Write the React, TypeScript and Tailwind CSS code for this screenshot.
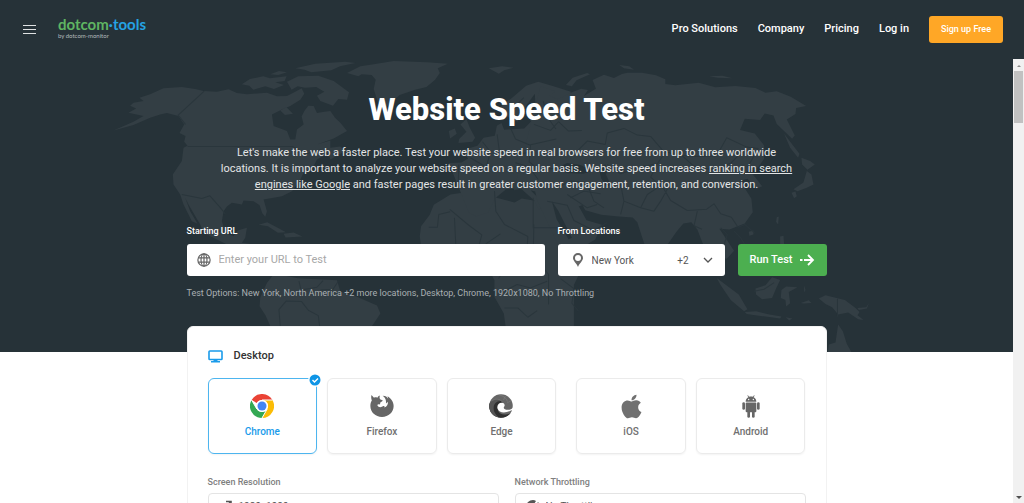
import { useState } from 'react'
import type { ReactNode } from 'react'
import { FaApple } from 'react-icons/fa'

type BrowserId = 'chrome' | 'firefox' | 'edge' | 'ios' | 'android'

const navLinks = ['Pro Solutions', 'Company', 'Pricing', 'Log in']

function ChromeIcon() {
  return (
    <svg viewBox="0 0 48 48" className="size-6">
      <path fill="#ea4335" d="M3.2 12A24 24 0 0 1 44.8 12H24a12 12 0 0 0-10.4 6z" />
      <path fill="#fbbc05" d="M44.8 12A24 24 0 0 1 24 48l10.4-18A12 12 0 0 0 34.4 18 12 12 0 0 0 24 12z" />
      <path fill="#34a853" d="M3.2 12A24 24 0 0 0 24 48l10.4-18a12 12 0 0 1-20.8 0z" />
      <path stroke="#fff" strokeWidth="2" d="M3.2 12l10.4 18M44.8 12H24M24 48l10.4-18" />
      <circle cx="24" cy="24" r="12" fill="#fff" />
      <circle cx="24" cy="24" r="9" fill="#4285f4" />
    </svg>
  )
}

function FirefoxIcon() {
  return (
    <svg viewBox="0 0 66 66" className="size-6">
      <path
        fill="#666"
        d="M4 3l7 7c3-1 6-1 9 0 2-3 4-5 7-6-1 4-1 7 0 9 2 3 5 3 8 4-1 4-6 5-7 7 0 3 0 4-1 5-3-1-5-1-7 1 3 7 10 8 17 3 3 0 4 2 2 4 8-2 11-9 10-16l-5 5c1-9-2-16-9-21 8 0 12 3 15 8 0-3-1-5-2-7 9 5 17 15 17 27 0 17-14 30-32 30S1 50 1 33c0-6 1-10 4-15-2-5-2-10-1-15z"
      />
    </svg>
  )
}

function EdgeIcon() {
  return (
    <svg viewBox="0 0 48 48" className="size-6">
      <circle cx="24" cy="24" r="23.5" fill="#666" />
      <path fill="#303030" d="M1 20C6 10 20 8 27 17c3 4 2 7 0 8-7-3-11 2-9 8 3 9 16 11 26 4C38 46 28 49 20 47 7 45-2 32 1 20z" />
      <path fill="#555" d="M1 19C7 9 18 9 23 14c-10 0-16 9-13 20 2 6 6 10 10 13C7 45-2 33 1 19z" />
      <path fill="#fff" d="M28 18c-7-2-13 4-11 11 3 9 15 10 27 4l4-1V27c-3 5-12 6-17 3-3-2-1-4 0-6 1-3-1-5-3-6z" />
      <path fill="none" stroke="#858585" d="M20 2c9 1 15 7 17 13M33 4l-4 8M45 13l-9 5M5 14c7-5 16-5 22 2" />
    </svg>
  )
}

function AndroidIcon() {
  return (
    <svg viewBox="0 0 54 68" className="h-[23px] w-[18px]" fill="#666">
      <path d="M11 20C11 13 14 9 19 6l-3-5 2-1 3 5c4-1 8-1 12 0l3-5 2 1-3 5c5 3 8 7 8 14z" />
      <rect x="11" y="22" width="32" height="29" rx="3" />
      <rect x="1" y="21" width="8" height="23" rx="4" />
      <rect x="45" y="21" width="8" height="23" rx="4" />
      <rect x="16" y="46" width="8" height="22" rx="4" />
      <rect x="30" y="46" width="8" height="22" rx="4" />
      <circle cx="20" cy="13" r="2" fill="#fff" />
      <circle cx="34" cy="13" r="2" fill="#fff" />
    </svg>
  )
}

function GlobeIcon() {
  return (
    <svg viewBox="0 0 16 16" className="size-3.5 shrink-0" fill="none" stroke="#666" strokeWidth="1.4">
      <circle cx="8" cy="8" r="7" />
      <ellipse cx="8" cy="8" rx="3.4" ry="7" />
      <path d="M8 1v14M1.6 5.5h12.8M1.6 10.5h12.8" />
    </svg>
  )
}

function PinIcon() {
  return (
    <svg viewBox="0 0 10 14" className="h-3.5 w-2.5 shrink-0">
      <path fill="#666" fillRule="evenodd" d="M5 0a5 5 0 0 1 5 5c0 3-3.5 5-5 9C3.5 10 0 8 0 5a5 5 0 0 1 5-5zm0 2a3 3 0 1 0 0 6 3 3 0 0 0 0-6z" />
    </svg>
  )
}

function ArrowIcon() {
  return (
    <svg viewBox="0 0 16 14" className="h-3.5 w-4" fill="none" stroke="#fff" strokeWidth="1.8">
      <path d="M1 7h2.5M5 7h9M9 2l5 5-5 5" />
    </svg>
  )
}

function MonitorIcon() {
  return (
    <svg viewBox="0 0 15 13" className="h-[13px] w-[15px]">
      <rect x="1" y="1" width="13" height="8.5" rx="0.8" fill="none" stroke="#1a9bea" strokeWidth="1.6" />
      <path fill="#1a9bea" d="M5.500 9.500h4v1.500H12v1.500H3V11h2.500z" />
    </svg>
  )
}

function ExpandIcon() {
  return (
    <svg viewBox="0 0 12 12" className="size-3" fill="none" stroke="#555" strokeWidth="1.6">
      <path d="M5 1.500h5V6.500M10 1.500L2 10M2 5v5h5" />
    </svg>
  )
}

function GaugeIcon() {
  return (
    <svg viewBox="0 0 14 12" className="h-3 w-3.5">
      <path fill="#555" d="M7 0a7 7 0 0 0-7 7c0 2 1 4 2 5h10c1-1 2-3 2-5 0-2-1-4-2-5L8 8 6 7l4-6a7 7 0 0 0-3-1z" />
    </svg>
  )
}

function Logo() {
  return (
    <a href="#" className="block font-[Lato,'Liberation_Sans',sans-serif]">
      <span className="block text-[15px] leading-4 font-bold text-[#5fb562]">
        dotcom<span className="text-[#25a3e3]">·tools</span>
      </span>
      <span className="block text-[6px] leading-[7px] text-[#b4babd]">by dotcom-monitor</span>
    </a>
  )
}

function WorldMap() {
  return (
    <svg
      aria-hidden="true"
      viewBox="-300 24 3036 882"
      preserveAspectRatio="xMidYMin slice"
      className="absolute inset-0 h-full w-full"
    >
      <g fill="#333e44">
        {/* Americas */}
        <path d="M85 185L108 172 90 164 100 155 130 150 118 140 150 130 190 112 245 108 285 114 310 120 350 122 385 115 410 126 440 130 500 125 530 136 560 135 585 122 604 112 612 128 600 146 570 165 545 175 515 190 520 225 560 240 570 265 585 265 590 235 610 220 604 196 612 180 624 164 640 165 650 186 672 182 690 180 704 200 720 215 740 240 700 262 650 280 690 268 690 290 720 286 735 300 690 325 684 306 650 325 640 345 610 365 600 385 590 400 575 420 545 435 520 440 490 445 500 480 495 497 486 486 478 462 460 450 430 448 425 460 395 455 380 466 370 480 365 510 375 545 400 555 412 538 440 530 435 560 425 575 460 580 460 600 400 590 350 565 310 545 300 520 265 460 255 440 270 480 292 518 275 510 250 460 240 430 220 400 218 370 245 330 250 290 262 284 252 272 256 255 238 246 252 220 235 195 200 186 180 190 150 200 100 222 40 238 100 212 130 195z" />
        <path d="M740 66l40-20 40-6 60-10 100 4 62 4-30 14 6 14-14 20-26 22-34 8-46 16-28 22-16 18-22-20-12-38 6-28-12-14-30-2-10 6z" />
        <path d="M425 100l24-16 40-8 20 6 50-6-6 14-28 4 26 8-30 12-26-8-36 10-12-12zM510 70l26-10 24 4-26 8zM585 52l60-14 90-6 30 4-46 10-26 12-60 6-20-8zM560 92l34-16 60-2 46 16 46 34-6 22-26-2-16 20-38-14-10-16 22-12-24-14-34 2-22-4-18 10zM540 178l18-10 20 20-24 4z" />
        <path d="M475 521l26-8 34 18 22 12-24 2-30-20zM550 548l30-4 26 12-50 3z" />
        <path d="M500 695l22-28 70 14 118 6 10 34 46 14 64 28 10 24-28 42H512l-16-36-18-28 2-26z" />
        {/* Africa and western Europe */}
        <path d="M1050 430l66-10 60-4 12 24 54 14 22-12 56 10 46-2 18 36 26 50 22 45 50 8 10 22-48 40-24 50v130h-204l-6-44-28-50v-50l-14-26-60 10-70-10-46-40-30-36-4-30 4-30 26-34 12-30z" />
        <path d="M1045 336l38-2 20-12-20-24 48-14 18-24 34-6 6-30 14-8 8 20 60-4 20-20-8-26 22-14-2-44-32 44-20 40-28-14-24-12 2-20 34-26 42-36 36-12 46 14 52 16-6 26 50-10 28 8v300l-54 22-36-10-18 18-22-18-18-32-36-24-16-12 10 30 38 38-16 18-14-28-40-36-44 2-34 28-20 42-36 12-22-12zM1076 264l22-22-18-22 18-16 10 26 16 30-8 12-42 4zM1045 240l18-8 6 16-20 14zM1165 52l40-6 34 4-28 8-16 10z" />
        {/* Asia and Oceania */}
        <g transform="translate(1320)">
          <path d="M0 105l44 16-16 14 24 10 34-18 36-14 20 4-12 18 36-22-10-26 34-16 30 10 24-12 16-4 44 0 42 8 28 12 0 14 30 4 70-8 50 14 60-4 60 6 30 14 34-4 42 16 46 28-30 6-2 18-26 16 24 48-8 10-46-44-10-26-26-6-14 20-46-4-14 34 44 10 28 36v40l-18 26-20 2-18 14 22 4 28 36-16 8-28-30-22 6 34 54 4 40-24 34-46 18-30-2 44 66-22 24-60-16-18-46-10-26-18-22-24 4-20 24-42 60-22 16-20 0-20-60-14-44-14-14-50-4-44-4-48-14-14-26-10 6 28 50 46 14-20 44-50 30-60-10-30-66-34-72-6-26-34-10-30 6z" />
          <path d="M76 102l20-22 44-14 8 4-40 18-14 18zM236 42l30 4 14 10-30-4zM505 76l40-2 30 8-44-2zM730 248l20 26 26 34-4 12-24-30zM782 320l26 10 14 10-22 16-16-16zM798 360l14 10 6 30-20 10-28 10-12-6 30-20zM752 425l12-4 4 14-8 6zM708 498l6-2-2 24-6-8zM624 542l14-4 0 12-12 4zM718 556l10-2 2 24 14 22-8 4-18-22z" />
          <path d="M528 680l26 20 40 30 26 44-10 6-40-34-30-44zM612 782l34-2 40 10 36 6-4 6-44-6-56-8zM644 712l30-10 20-24 24 8-12 26-12 28-30 4-18-14zM722 716l14-10 34 2-26 14 4 34-12 10-2-20-14-6zM790 702l4 14-4 8zM834 742l20-10 24 6 34 8 32 24 12 12-6 10 18 14-16-2-30-20-30 6-18-22-20-10zM950 770l26-2 8-12-6 16-24 4zM735 798l20 4-10 6zM860 906l4-26 20-6 8-54 14 20 12 38 16 28zM780 755l24-8 8 8-24 2z" />
        </g>
      </g>
      {/* inland waters */}
      <path fill="#263238" d="M1370 350l30-14 40 6 34 18-26 8-50-2zM1494 350l20-10 8 16-6 14 14 30-12 8-16-26zM1354 450l20 30 40 80-10 4-36-60z" />
      {/* borders */}
      <g fill="none" stroke="#2a363c" strokeWidth="3" strokeLinejoin="round">
        <path d="M312 120l-78 72 22 28M262 286h315l40 22 46-12M245 430l60 12 24-8 30 34 16 20M350 545l20-12 20 18" />
        <path d="M596 690l6 26 48-8 18-20M540 825l-4-50 22-26 46 2 20 26 30 16 4 32M714 690l-16 24-38 2" />
        <path d="M985 528h26l4-38 34-8M1048 475l58 48 38 28-8 30M1062 500l4 80-24 2M1182 420l4 60 26 40 70 36M1298 440v90h80M1200 548l-44 30M1282 556l-4 60-60 30-24 36M1300 520l-2 90 46 60v90M1212 770h40l30 28 28-20M1380 682l40 30-6 44 20 24M1340 690l-50 20-40-10-40 20" />
        <path d="M1075 340l-2 70M1110 320l40 24M1146 272l24 30-12 44M1190 250l6 46 32 16 60-8M1225 220l20 44 42 18 80-18M1240 170l30-30M1290 282l-4 50 30 24 44-4M1300 220l50 18 24-26 30 28 40-2M1245 335l40 12 28 38M1328 150l14 50 24 34M1410 440l40-20 50 8M1370 410l40-20 60 6" />
        <g transform="translate(1320)">
          <path d="M110 300l30-30 54 10 6-34 50-14 40 20 40 4 38 44 40 12 60 4 60-2 30-54 60 28 34 4-30 54 20 30M200 340l40 28 60-20 50-10 28-40M350 338l-20 40 40 36 20 34 50 30 58-4 22-16 20 30 32 10 20 30 20-8 30 26M420 310l40 36 60 10 50-20 30-30M80 430l60 40 30-10M20 450l60 12 20 46 60 30 40-24M140 400l20 50 30 20M240 400l10 50 50 20 20-40 30-20M300 470l40 10 20-30 20-36M250 450l-10 40M470 480l-10 44 24 10M540 530l20 20-10 30M580 540l20 20 14 24M890 742v54M640 720l30-6 30-20" />
        </g>
      </g>
    </svg>
  )
}

interface BrowserCardProps {
  id: BrowserId
  label: string
  icon: ReactNode
  selected: boolean
  spaced?: boolean
  onSelect: (id: BrowserId) => void
}

function BrowserCard({ id, label, icon, selected, spaced = false, onSelect }: BrowserCardProps) {
  return (
    <label
      className={`
        relative flex h-[76px] flex-1 cursor-pointer flex-col items-center rounded-md border pt-[15px] shadow-xs
        text-[10px] leading-3 font-medium
        ${selected ? 'border-[#4db5ef] text-[#1a9bea]' : 'border-[#ebebeb] text-[#707070]'}
        ${spaced ? 'ml-2.5' : ''}
      `}
    >
      <input
        type="radio"
        name="browser"
        value={id}
        checked={selected}
        onChange={() => onSelect(id)}
        className="sr-only"
      />
      <span className="flex h-6 items-center">{icon}</span>
      <span className="mt-2">{label}</span>
      {selected && (
        <svg viewBox="0 0 14 14" className="absolute -top-1.5 -right-1.5 size-3.5">
          <circle cx="7" cy="7" r="7" fill="#fff" />
          <circle cx="7" cy="7" r="5.5" fill="#0f95e6" />
          <path d="M4.500 7l2 2 3.500-3.500" fill="none" stroke="#fff" strokeWidth="1.4" />
        </svg>
      )}
    </label>
  )
}

interface OptionSelectProps {
  id: string
  label: string
  icon: ReactNode
  options: string[]
}

function OptionSelect({ id, label, icon, options }: OptionSelectProps) {
  return (
    <div className="flex-1">
      <label htmlFor={id} className="block text-[9px] leading-3 font-medium text-[#808080]">
        {label}
      </label>
      <div className="mt-[5px] flex h-[26px] items-center gap-1.5 rounded-sm border border-[#e4e4e4] pr-3 pl-2.5">
        <span className="flex w-3.5 justify-end">{icon}</span>
        <select id={id} className="flex-1 appearance-none bg-transparent text-[10px] text-[#555] outline-none">
          {options.map((option) => (
            <option key={option}>{option}</option>
          ))}
        </select>
      </div>
    </div>
  )
}

function Scrollbar() {
  return (
    <div aria-hidden="true" className="flex w-[11px] shrink-0 flex-col items-center bg-[#f1f1f1]">
      <span className="mt-1 mb-1 border-x-2 border-b-2 border-x-transparent border-b-[#8a8a8a] py-px" />
      <span className="h-[52px] w-[9px] bg-[#c1c1c1]" />
      <span className="mt-auto mb-1 border-x-3 border-t-3 border-x-transparent border-t-[#505050]" />
    </div>
  )
}

export default function App() {
  const [browser, setBrowser] = useState<BrowserId>('chrome')

  const browsers: { id: BrowserId; label: string; icon: ReactNode; spaced?: boolean }[] = [
    { id: 'chrome', label: 'Chrome', icon: <ChromeIcon /> },
    { id: 'firefox', label: 'Firefox', icon: <FirefoxIcon /> },
    { id: 'edge', label: 'Edge', icon: <EdgeIcon /> },
    { id: 'ios', label: 'iOS', icon: <FaApple className="size-[27px]" />, spaced: true },
    { id: 'android', label: 'Android', icon: <AndroidIcon /> }
  ]

  return (
    <div className="flex h-screen flex-col bg-white font-[Roboto,'Liberation_Sans',sans-serif]">
      <header className="flex h-[59px] shrink-0 items-center bg-[#263238] pr-[21px] pl-[23px]">
        <button aria-label="Menu" className="flex w-[13px] flex-col gap-[3px]">
          <span className="h-px w-full bg-[#dfe2e3]" />
          <span className="h-px w-full bg-[#dfe2e3]" />
          <span className="h-px w-full bg-[#dfe2e3]" />
        </button>
        <div className="mb-1 ml-[22px]">
          <Logo />
        </div>
        <nav className="ml-auto flex items-center gap-5 text-[11px] font-medium text-white">
          {navLinks.map((link) => (
            <a key={link} href="#">{link}</a>
          ))}
          <button className="h-[27px] rounded-[3px] bg-[#ffa726] px-3 text-[9px] font-medium">
            Sign up Free
          </button>
        </nav>
      </header>

      <div className="flex min-h-0 flex-1">
        <main className="flex-1 overflow-y-auto [scrollbar-width:none]">
          <section className="relative bg-[#263238] pb-[52px] text-white">
            <WorldMap />
            <div className="relative mx-auto max-w-[640px] pt-[31px]">
              <h1 className="text-center text-[31px] leading-10 font-extrabold">Website Speed Test</h1>
              <p className="mx-auto mt-[15px] max-w-[584px] text-center text-[11px] leading-4 text-[#e3e5e6]">
                Let's make the web a faster place. Test your website speed in real browsers for free from up to three
                worldwide locations. It is important to analyze your website speed on a regular basis. Website speed
                increases <a href="#" className="underline">ranking in search engines like Google</a> and faster pages
                result in greater customer engagement, retention, and conversion.
              </p>

              <form className="mt-[31px] flex items-end gap-[13px]" onSubmit={(e) => e.preventDefault()}>
                <div className="flex-1">
                  <label htmlFor="url" className="block text-[9px] leading-[14px] font-medium">Starting URL</label>
                  <div className="mt-1.5 flex h-8 items-center gap-2 rounded-[3px] bg-white px-2.5">
                    <GlobeIcon />
                    <input
                      id="url"
                      type="text"
                      placeholder="Enter your URL to Test"
                      className="min-w-0 flex-1 text-[11px] text-[#444] outline-none placeholder:text-[#a8a8a8]"
                    />
                  </div>
                </div>
                <div className="w-[167px]">
                  <label htmlFor="location" className="block text-[9px] leading-[14px] font-medium">From Locations</label>
                  <div className="mt-1.5 flex h-8 items-center rounded-[3px] bg-white pr-3 pl-[15px] text-[10px] text-[#555]">
                    <PinIcon />
                    <select id="location" className="ml-[9px] flex-1 appearance-none bg-transparent outline-none">
                      <option>New York</option>
                      <option>London</option>
                      <option>Tokyo</option>
                    </select>
                    <span>+2</span>
                    <svg viewBox="0 0 10 6" className="ml-3.5 h-1.5 w-2.5" fill="none" stroke="#555" strokeWidth="1.3">
                      <path d="M1 1l4 4 4-4" />
                    </svg>
                  </div>
                </div>
                <button className="flex h-8 w-[89px] items-center justify-center gap-1.5 rounded-[3px] bg-[#4caf50] text-[11px] font-medium">
                  Run Test
                  <ArrowIcon />
                </button>
              </form>
              <p className="mt-2.5 text-[9px] leading-[14px] text-[#a9afb2]">
                Test Options: New York, North America +2 more locations, Desktop, Chrome, 1920x1080, No Throttling
              </p>
            </div>
          </section>

          <section className="relative mx-auto -mt-[26px] max-w-[640px] rounded-md border border-[#f2f2f2] bg-white px-5 pt-[21px] pb-6">
            <h2 className="flex items-center gap-[11px] text-[11px] leading-4 font-medium text-[#333]">
              <MonitorIcon />
              Desktop
            </h2>
            <div className="mt-3.5 flex gap-2.5">
              {browsers.map((item) => (
                <BrowserCard key={item.id} {...item} selected={browser === item.id} onSelect={setBrowser} />
              ))}
            </div>
            <div className="mt-[22px] flex gap-4">
              <OptionSelect
                id="resolution"
                label="Screen Resolution"
                icon={<ExpandIcon />}
                options={['1920x1080', '1366x768']}
              />
              <OptionSelect
                id="throttling"
                label="Network Throttling"
                icon={<GaugeIcon />}
                options={['No Throttling', 'Regular 4G']}
              />
            </div>
          </section>
        </main>
        <Scrollbar />
      </div>
    </div>
  )
}
